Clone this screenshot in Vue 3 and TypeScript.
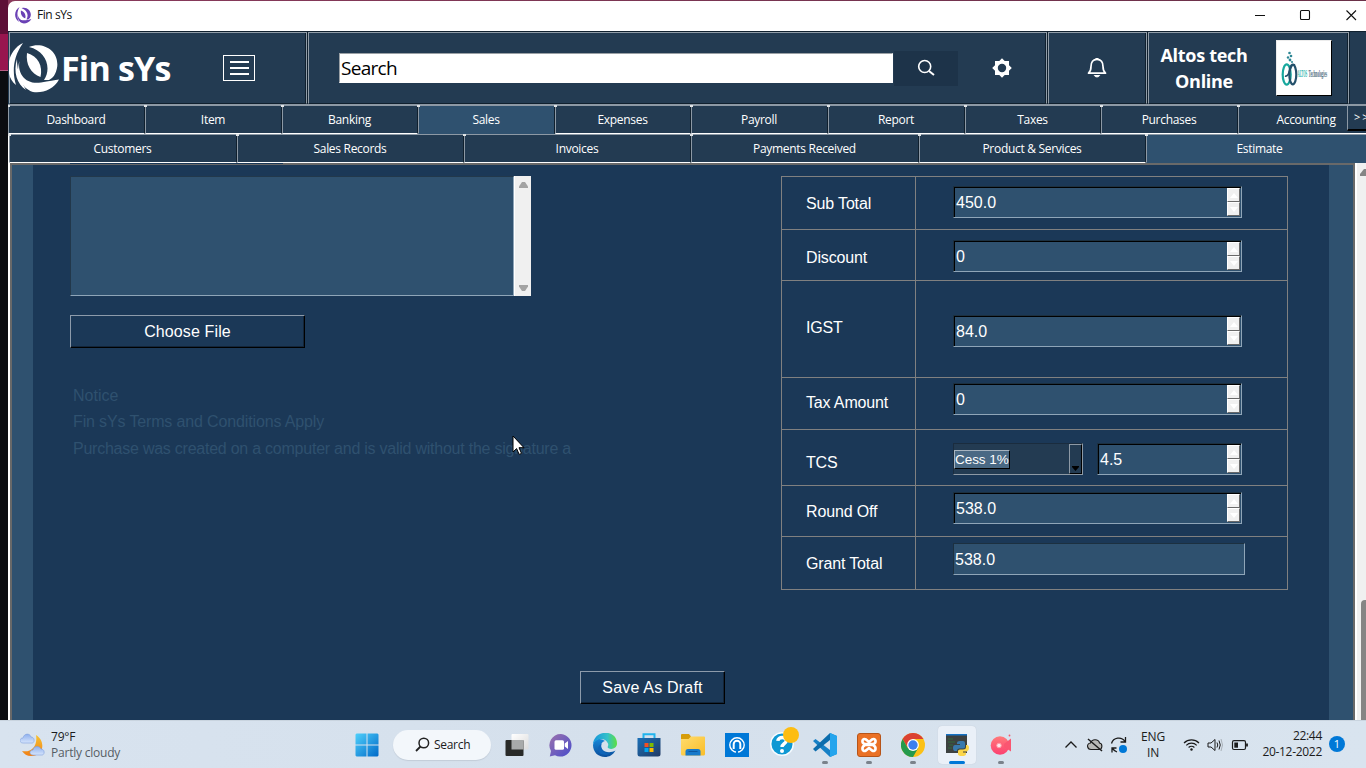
<script setup lang="ts">
interface Tab { label: string; active?: boolean }
interface Row { label: string; value: string; height: number; labelTop: number; fieldTop: number; kind: 'spin' | 'tcs' | 'plain' }

const mainTabs: Tab[] = [
  { label: 'Dashboard' }, { label: 'Item' }, { label: 'Banking' }, { label: 'Sales', active: true },
  { label: 'Expenses' }, { label: 'Payroll' }, { label: 'Report' }, { label: 'Taxes' },
  { label: 'Purchases' }, { label: 'Accounting' },
]
const subTabs: Tab[] = [
  { label: 'Customers' }, { label: 'Sales Records' }, { label: 'Invoices' },
  { label: 'Payments Received' }, { label: 'Product & Services' }, { label: 'Estimate', active: true },
]
const rows: Row[] = [
  { label: 'Sub Total', value: '450.0', height: 53, labelTop: 17, fieldTop: 10, kind: 'spin' },
  { label: 'Discount', value: '0', height: 51, labelTop: 18, fieldTop: 11, kind: 'spin' },
  { label: 'IGST', value: '84.0', height: 97, labelTop: 37, fieldTop: 35, kind: 'spin' },
  { label: 'Tax Amount', value: '0', height: 52, labelTop: 15, fieldTop: 6, kind: 'spin' },
  { label: 'TCS', value: '4.5', height: 56, labelTop: 23, fieldTop: 14, kind: 'tcs' },
  { label: 'Round Off', value: '538.0', height: 51, labelTop: 16, fieldTop: 7, kind: 'spin' },
  { label: 'Grant Total', value: '538.0', height: 54, labelTop: 17, fieldTop: 7, kind: 'plain' },
]
</script>

<template>
  <div class="desktop">
    <div class="edge"><i class="e1"></i><i class="e2"></i><i class="e3"></i></div>
    <div class="window">
      <div class="titlebar">
        <svg class="tlogo" width="17" height="17" viewBox="0 0 52 52" fill="#6a41b5">
          <path d="M14 0C-3 9-5 36 13 46C6 34 4 17 14 0Z" />
          <path d="M9 18C7 32 17 43 32 40.500C40 39 46 38 50 36.500C45 46 34 51 24 50C12 46 5 33 9 18Z" />
          <path d="M20 3.500C35-2 51 11 48 27C47 32 44.500 36 40 38L35 38C43 26 37 8 20 3.500Z" />
          <path d="M18 10.500C29 14 34 24 31.500 34.500C22 31.500 16.500 22 18 10.500Z" />
        </svg>
        <span class="ttext">Fin sYs</span>
        <svg class="wctl" width="104" height="14" viewBox="0 0 104 14" fill="none" stroke="#111" stroke-width="1.1">
          <path d="M0 7.500H10" /><rect x="45.500" y="2.500" width="9" height="9" rx="1" /><path d="M91.500 2.500L101 12M101 2.500L91.500 12" />
        </svg>
      </div>

      <header class="header">
        <div class="panel p1">
          <svg class="logo" width="52" height="52" viewBox="0 0 52 52" fill="#fff">
            <path d="M14 1C-3 9-5 34 7 43C3 30 4 15 14 1Z" />
            <path d="M8 17C4 30 8 42 17 48C12 39 8 30 8 17Z" />
            <path d="M10.500 19C8 32 17 43 32 40.500C40 39 46 38 50 37.500C45 47 34 51.500 24 50C12 46 6 33 10.500 19Z" />
            <path d="M20 5C35-1 51 10 48 26C47 31 44.500 36 40 38L35 38C43 26 37 9 20 5Z" />
            <path d="M18 11C29 14 34 24 31.500 35C22 32 16.500 22 18 11Z" />
          </svg>
          <span class="brand">Fin sYs</span>
          <span class="burger"><i></i><i></i><i></i></span>
        </div>
        <div class="panel p2">
          <div class="search">Search</div>
          <div class="sbtn">
            <svg width="20" height="20" viewBox="0 0 20 20" fill="none" stroke="#fff" stroke-width="1.6"><circle cx="8.700" cy="8.500" r="6" /><path d="M13 13L18 17" stroke-width="2" /></svg>
          </div>
          <svg class="gear" width="20" height="20" viewBox="0 0 20 20"><path fill="#fff" fill-rule="evenodd" d="M10 .2L12.700 3H17V7.300L19.800 10L17 12.700V17H12.700L10 19.800L7.300 17H3V12.700L.2 10L3 7.300V3H7.300ZM10 5.800A4.200 4.200 0 1 0 10 14.200A4.200 4.200 0 1 0 10 5.800Z" /></svg>
        </div>
        <div class="panel p3">
          <svg width="20" height="22" viewBox="0 0 20 22" fill="none" stroke="#fff" stroke-width="1.700" stroke-linejoin="round"><path d="M1.500 16.200H18.500C16.500 14.500 16 13 16 9.500C16 5 14 2.300 10 2.300C6 2.300 4 5 4 9.500C4 13 3.500 14.500 1.500 16.200Z" /><path d="M8.800 2.300V1.500H11.200V2.300M7.300 18.500C8 20.400 12 20.400 12.700 18.500Z" fill="#fff" stroke-width="1" /></svg>
        </div>
        <div class="panel p4">
          <span class="company">Altos tech<br>Online</span>
          <div class="clogo">
            <svg width="50" height="36" viewBox="0 0 50 36">
              <g fill="none" stroke-width="2.200"><ellipse cx="5.700" cy="23.500" rx="4" ry="10.200" stroke="#17a89e" /><ellipse cx="11.800" cy="23.500" rx="3.500" ry="9.800" stroke="#24516b" /><path d="M4 25C9 27 9 11 14 14" stroke="#24516b" stroke-width="1.600" /></g>
              <g fill="#2c8694"><circle cx="8.500" cy="2" r="1.300" /><circle cx="10" cy="5" r="1.300" /><circle cx="7" cy="6.500" r="1.200" /><circle cx="9" cy="9" r="1.400" /><circle cx="11" cy="11" r="1" /></g>
              <g font-family="Liberation Serif, serif" font-size="11" font-weight="bold">
                <text transform="translate(16.500 26) scale(.27 1)" fill="#24b3aa">ALTOS</text>
                <text transform="translate(27.500 26) scale(.31 1)" fill="#4b6b80">Technologies</text>
              </g>
            </svg>
          </div>
        </div>
      </header>

      <nav class="tabs main-tabs">
        <div v-for="t in mainTabs" :key="t.label" class="tab" :class="{ active: t.active }">{{ t.label }}</div>
        <span class="more">&gt;&gt;</span>
      </nav>
      <nav class="tabs sub-tabs">
        <div v-for="t in subTabs" :key="t.label" class="tab" :class="{ active: t.active }">{{ t.label }}</div>
      </nav>

      <main class="body">
        <div class="canvas">
          <div class="sheet">
            <section class="left">
              <div class="notes">
                <div class="area"></div>
                <div class="abar">
                  <svg width="9" height="6" viewBox="0 0 9 6"><path d="M3 0H6L9 4.500V6H0V4.500Z" fill="#a3a3a3" /></svg>
                  <svg width="9" height="6" viewBox="0 0 9 6"><path d="M3 6H6L9 1.500V0H0V1.500Z" fill="#a3a3a3" /></svg>
                </div>
              </div>
              <button class="btn choose">Choose File</button>
              <div class="terms">
                <p>Notice</p>
                <p class="t2">Fin sYs Terms and Conditions Apply</p>
                <p class="t3">Purchase was created on a computer and is valid without the signature a</p>
              </div>
              <button class="btn save">Save As Draft</button>
            </section>
            <section class="totals">
              <div v-for="r in rows" :key="r.label" class="row" :style="{ height: r.height + 'px' }">
                <div class="lab" :style="{ paddingTop: r.labelTop + 'px' }">{{ r.label }}</div>
                <div class="val" :style="{ paddingTop: r.fieldTop - 1 + 'px' }">
                  <div v-if="r.kind === 'tcs'" class="combo">
                    <span class="picked">Cess 1%</span>
                    <span class="drop"><svg width="7" height="5" viewBox="0 0 7 5"><path d="M0 0H7V1L3.500 5L0 1Z" /></svg></span>
                  </div>
                  <div class="field" :class="r.kind">
                    <span>{{ r.value }}</span>
                    <div v-if="r.kind !== 'plain'" class="spinner">
                      <i><svg width="8" height="5" viewBox="0 0 8 5"><path d="M4 0L8 5H0Z" fill="#fff" /></svg></i>
                      <i><svg width="8" height="5" viewBox="0 0 8 5"><path d="M0 0H8L4 5Z" fill="#fff" /></svg></i>
                    </div>
                  </div>
                </div>
              </div>
            </section>
          </div>
        </div>
        <div class="vbar"><svg width="6" height="7" viewBox="0 0 6 7"><path d="M0 7V5L4 0H6V7Z" fill="#858585" /></svg><i></i></div>
        <i class="sliver"></i>
      </main>
    </div>

    <footer class="taskbar">
      <div class="weather">
        <svg width="25" height="24" viewBox="0 0 25 24">
          <defs><linearGradient id="moon" x1="0" y1="0" x2="0" y2="1"><stop offset="0" stop-color="#f7c331" /><stop offset="1" stop-color="#f07f16" /></linearGradient>
            <linearGradient id="cl" x1="0" y1="0" x2="0" y2="1"><stop offset="0" stop-color="#8fb0ee" /><stop offset="1" stop-color="#d5e4fb" /></linearGradient></defs>
          <path d="M16 2C26 8 24 23 11 23C7 23 4 21 2 18C11 20 18 13 16 2Z" fill="url(#moon)" />
          <path d="M3 10C-1 10-1 5 3 5C4 0 10 0 11 4C15 4 15 10 12 10Z" fill="url(#cl)" stroke="#7f9fdd" stroke-width=".6" />
          <path d="M13 22C9 22 9 17 13 17C14 12 20 13 21 16C25 16 25 22 22 22Z" fill="url(#cl)" stroke="#7f9fdd" stroke-width=".6" />
        </svg>
        <p>79°F<br><span>Partly cloudy</span></p>
      </div>

      <div class="apps">
        <div class="app"><svg width="24" height="24" viewBox="0 0 24 24">
          <defs><linearGradient id="win" x1="0" y1="0" x2="1" y2="1"><stop offset="0" stop-color="#4fd0fb" /><stop offset="1" stop-color="#0069c8" /></linearGradient></defs>
          <path fill="url(#win)" d="M1.500 .5H11.500V11.500H.5V1.500ZM12.500 .5H22.500L23.500 1.500V11.500H12.500ZM.5 12.500H11.500V23.500H1.500L.5 22.500ZM12.500 12.500H23.500V22.500L22.500 23.500H12.500Z" /></svg></div>
        <div class="pill"><svg width="15" height="15" viewBox="0 0 15 15" fill="none" stroke="#222" stroke-width="1.500"><circle cx="8.800" cy="6" r="4.800" /><path d="M5.500 9.500L1 14" stroke-width="1.800" /></svg>Search</div>
        <div class="app"><svg width="24" height="24" viewBox="0 0 24 24">
          <defs><linearGradient id="tv" x1="0" y1="0" x2="1" y2="1"><stop offset="0" stop-color="#fff" /><stop offset="1" stop-color="#dcdcdc" /></linearGradient></defs>
          <rect x="6.500" y="1" width="17" height="15.500" rx="1" fill="url(#tv)" /><rect x=".5" y="7" width="18" height="16" rx="1" fill="#292a28" /><path d="M6.500 7H18.500V16.500H6.500Z" fill="#a8aaaa" /></svg></div>
        <div class="app"><svg width="24" height="24" viewBox="0 0 24 24">
          <defs><linearGradient id="chat" x1="0" y1="0" x2="1" y2="1"><stop offset="0" stop-color="#9c72ad" /><stop offset="1" stop-color="#484ccb" /></linearGradient></defs>
          <path fill="url(#chat)" d="M12 1A11.300 11.300 0 1 1 6 22.300L.8 23.500L2 18A11.300 11.300 0 0 1 12 1Z" /><rect x="5.500" y="7.300" width="9.500" height="9.500" rx="1.500" fill="#fff" /><path d="M15.700 10.500L19 8V16L15.700 13.500Z" fill="#fff" /></svg></div>
        <div class="app"><svg width="24" height="24" viewBox="0 0 24 24">
          <defs><linearGradient id="e1" x1="0" y1="0" x2="1" y2="0"><stop offset="0" stop-color="#1795dc" /><stop offset=".6" stop-color="#34c1c9" /><stop offset="1" stop-color="#5ee03e" /></linearGradient><linearGradient id="e2" x1="0" y1="0" x2="0" y2="1"><stop offset="0" stop-color="#1687d9" /><stop offset="1" stop-color="#0b4e9b" /></linearGradient></defs>
          <path fill="url(#e2)" d="M0 12C1 6 7 4 12 8C8 9 7 13 9 16C12 20 18 20 22.500 17.500C20 22 16 24 12 24C5 24 0 19 0 12Z" />
          <path fill="url(#e1)" d="M0 11.500C1-4 24-4 24 10.500C24 15 19 17 15.500 15.300C13.500 14 16 13 15 10.500C12 4 3 5 0 11.500Z" /><path d="M8.500 11C7 16 11 21 17 20.500C13 23 7 22 5.500 18C4.500 15 6 12 8.500 11Z" fill="#0e64b8" /></svg></div>
        <div class="app"><svg width="24" height="24" viewBox="0 0 24 24">
          <defs><linearGradient id="st" x1="0" y1="0" x2="1" y2="1"><stop offset="0" stop-color="#1a70b8" /><stop offset="1" stop-color="#223a63" /></linearGradient></defs>
          <path d="M6.500 6V1.300H17.500V6" fill="none" stroke="#21b4ed" stroke-width="2" /><path d="M.5 5H23.500V21Q23.500 23.500 21 23.500H3Q.5 23.500 .5 21Z" fill="url(#st)" />
          <path fill="#f25022" d="M7.500 10h4v4h-4z" /><path fill="#7fba00" d="M12.500 10h4v4h-4z" /><path fill="#00a4ef" d="M7.500 15h4v4h-4z" /><path fill="#ffb900" d="M12.500 15h4v4h-4z" /></svg></div>
        <div class="app"><svg width="24" height="24" viewBox="0 0 24 24">
          <defs><linearGradient id="fo" x1="0" y1="0" x2="1" y2="1"><stop offset="0" stop-color="#ffdc6e" /><stop offset="1" stop-color="#f9bd28" /></linearGradient></defs>
          <path d="M0 2Q0 1 1 1H8L10 3.500V8H0Z" fill="#d69c0a" /><path d="M0 6H7.500L10 3.500H23Q24 3.500 24 4.500V21Q24 22.500 22.500 22.500H1.500Q0 22.500 0 21Z" fill="url(#fo)" /><path d="M4.500 22.500V18.500Q4.500 16 7 16H17Q19.500 16 19.500 18.500V22.500Z" fill="#1679ca" /><path d="M7.500 18.500H16.500" stroke="#0b57a0" /></svg></div>
        <div class="app"><svg width="24" height="24" viewBox="0 0 24 24"><path fill="#0078d7" d="M0 0H24V24H0Z" /><circle cx="12" cy="12" r="7.200" fill="none" stroke="#fff" stroke-width="1.400" /><path d="M8.700 16V11A3.300 3.300 0 0 1 15.300 11V16" fill="none" stroke="#fff" stroke-width="2" /><path d="M11 20V12A1 1 0 0 1 13 12V20Z" fill="#0078d7" /></svg></div>
        <div class="app"><svg width="30" height="30" viewBox="0 0 30 30" class="help"><circle cx="13" cy="17" r="11.300" fill="#0e98d3" stroke="#f6fbff" stroke-width="1.500" /><path d="M8.800 13.800C9 9.500 17.500 9.300 17.200 13.800C17 16.500 13 16.800 13 20" fill="none" stroke="#fff" stroke-width="3.400" /><circle cx="13" cy="24" r="2" fill="#fff" /><circle cx="22" cy="8" r="8" fill="#fdbd12" /></svg></div>
        <div class="app run"><svg width="24" height="24" viewBox="0 0 24 24"><path d="M17 0L24 3V21L17 24L0 8L2.500 6L17 17Z" fill="#1680c6" /><path d="M17 0L0 16L2.500 18.500L17 7Z" fill="#0c6dad" /><path d="M17 0L24 3V21L17 24Z" fill="#25a5ed" /></svg></div>
        <div class="app run"><svg width="24" height="24" viewBox="0 0 24 24"><rect x=".5" y=".5" width="23" height="23" rx="2.500" fill="#ea7125" stroke="#b65419" /><path d="M9 6.500C5 4.500 4 10 8 11H16C20 10 19 4.500 15 6.500L12 9L9 6.500ZM9 17.500C5 19.500 4 14 8 12H16C20 14 19 19.500 15 17.500L12 15Z" fill="none" stroke="#fff" stroke-width="2.600" stroke-linejoin="round" /></svg></div>
        <div class="app run"><svg width="24" height="24" viewBox="0 0 24 24"><circle cx="12" cy="12" r="12" fill="#fbc116" /><path d="M1.600 6A12 12 0 0 1 22.400 6H12L7 15Z" fill="#db4132" /><path d="M1.600 6A12 12 0 0 0 12 24L17.200 15L12 12L6.800 15Z" fill="#249a4c" /><circle cx="12" cy="12" r="5.900" fill="#fff" /><circle cx="12" cy="12" r="4.700" fill="#3c7ff0" /></svg></div>
        <div class="app current"><svg width="24" height="24" viewBox="0 0 24 24"><path fill="#3d4140" d="M1 1H22V20H1Z" /><path fill="#1673c5" d="M1 1H22V2.500H1Z" /><path d="M3 6H8M3 9H10M4 12H8M3 15H7" stroke="#326b3c" stroke-width="1.200" />
          <path fill="#3979ad" d="M15 8H18Q20 8 20 10V14Q20 15.500 18 15.500H14Q12 15.500 12 18H10Q8 18 8 15Q8 12 10 12H15V11H12V10Q12 8 15 8Z" /><path fill="#fbd64a" d="M21 12H22Q24 12 24 15Q24 18 22 18.500H18V19.500H21V21Q21 23 17 23Q13 23 13 21V18Q13 16.500 15 16.500H18Q21 16.500 21 14Z" /></svg></div>
        <div class="app run"><svg width="24" height="24" viewBox="0 0 24 24"><defs><linearGradient id="cam" x1="0" y1="0" x2="0" y2="1"><stop offset="0" stop-color="#ff7b7c" /><stop offset="1" stop-color="#fc4070" /></linearGradient></defs><circle cx="11" cy="12.500" r="9.300" fill="url(#cam)" /><path d="M15 11L22 5.500V18.500L15 14Z" fill="#fa5671" /><circle cx="10" cy="12.500" r="2.300" fill="#ffe7ec" stroke="#ff9aa6" /><circle cx="20.500" cy="2.500" r=".9" fill="#f6586e" /></svg></div>
      </div>

      <div class="tray">
        <svg width="75" height="24" viewBox="0 0 75 24" fill="none" stroke="#1b1b1b" stroke-width="1.300">
          <path d="M2.500 14.500L8 9L13.500 14.500" />
          <path d="M28 16.500C24 16.500 23 10.500 27.500 10C29 5.500 35.500 6 36.500 10C40 10.500 39.500 16.500 36 16.500Z" fill="#b9b9b6" stroke-width="1.100" /><path d="M25 6L39 18" stroke-width="1.500" />
          <path d="M48.500 10.500A7.500 7.500 0 0 1 62 8.500M62.500 4V9H57.500M49 19.500V15H53.500M49.500 15.500C51 17.500 52.500 18.500 54 19" /><circle cx="60" cy="16" r="4" fill="#0078d7" stroke="none" />
        </svg>
        <div class="lang">ENG<br>IN</div>
        <svg class="status" width="68" height="20" viewBox="0 0 68 20" fill="none" stroke="#1b1b1b" stroke-width="1.200">
          <path d="M1 8A10.500 10.500 0 0 1 16 8M3.300 10.300A7.200 7.200 0 0 1 13.700 10.300M5.600 12.500A4.200 4.200 0 0 1 11.400 12.500" /><circle cx="8.500" cy="14.500" r="1.200" fill="#1b1b1b" stroke="none" />
          <path d="M25 8H28L32 4.500V15.500L28 12H25ZM34 7.500Q35.500 10 34 12.500M36 5.500Q38.500 10 36 14.500" stroke-width="1" /><path d="M38 4Q41 10 38 16" stroke="#a8b0b8" stroke-width="1" />
          <rect x="49.500" y="5.700" width="13" height="8.800" rx="1.500" /><path d="M51.300 7.500H55V12.700H51.300Z" fill="#1b1b1b" stroke="none" /><path d="M64 8.500V11.500" stroke-width="1.800" />
        </svg>
        <div class="clock">22:44<br>20-12-2022</div>
        <div class="badge">1</div>
      </div>
    </footer>

    <svg class="cursor" width="14" height="22" viewBox="0 0 14 22"><path d="M1 1V17L4.600 13.600L7.200 19.400L9.500 18.400L7 12.700H12Z" fill="#fff" stroke="#000" stroke-width="1" /></svg>
  </div>
</template>

<style>
html, body { margin: 0; overflow: hidden; }
</style>

<style scoped>
* { box-sizing: border-box; }
.desktop { position: relative; width: 1366px; height: 768px; overflow: hidden; background: linear-gradient(90deg, #8a3a5c, #6a3048); font-family: "Open Sans", "Noto Sans", sans-serif; display: grid; grid-template: 720px 48px / 8px 1358px; }
i { display: block; font-style: normal; }
p { margin: 0; }
.edge { background: #0b0c10; }
.e1 { height: 34px; background: #5d0f37; }
.e2 { height: 36px; background: #98164f; }
.e3 { height: 1px; background: #b65b82; }
.window { margin-top: 1px; height: 719px; background: #fff; border-top-left-radius: 7px; overflow: hidden; }
.titlebar { height: 30px; display: flex; align-items: center; padding-left: 7px; color: #111; }
.tlogo { margin-bottom: 2px; }
.ttext { font-size: 12px; letter-spacing: -0.45px; margin-left: 5px; flex: 1; line-height: 28px; padding-bottom: 2px; }
.wctl { margin: 0 7px 2px 0; flex: none; }
.header { height: 75px; background: #233b52; display: flex; gap: 1px; border-top: 1px solid #10202e; border-bottom: 2px solid #8d99a5; padding-left: 1px; }
.panel { flex: none; height: 72px; border: 1px solid #919da8; border-bottom-color: #10202e; box-shadow: inset -1px 0 #10202e, 1px 0 #10202e; display: flex; align-items: center; }
.p1 { width: 298px; }
.p2 { width: 739px; padding-left: 30px; }
.p3 { width: 99px; justify-content: center; padding-right: 2px; }
.p4 { width: 201px; padding-left: 11px; }
.logo { flex: none; margin-left: -1px; }
.brand { width: 161px; color: #fff; font-weight: 700; font-size: 34px; line-height: 40px; letter-spacing: -0.8px; white-space: nowrap; }
.burger { width: 32px; height: 26px; border: 1px solid #fff; display: flex; flex-direction: column; justify-content: center; align-items: center; gap: 3.5px; margin-left: 1px; }
.burger i { width: 19px; height: 2.5px; background: #fff; }
.search { width: 554px; height: 30px; background: #fff; border: 1px solid #9aa0a5; border-right-color: #fff; border-bottom-color: #fff; color: #000; font-size: 19px; line-height: 28px; letter-spacing: -0.7px; padding-left: 1px; }
.sbtn { width: 64px; height: 35px; margin-left: 1px; background: #1d3349; display: flex; align-items: center; justify-content: center; }
.gear { margin-left: 34px; }
.company { width: 88px; text-align: center; font-weight: 700; font-size: 18px; line-height: 26px; color: #fff; white-space: nowrap; letter-spacing: -0.3px; }
.clogo { width: 56px; height: 56px; margin-left: 28px; background: #fff; border: 1px solid #ececec; border-right-color: #000; border-bottom-color: #000; display: flex; padding: 10px 0 0 4px; }
.clogo svg { overflow: visible; }
.tabs { display: grid; background: #233b52; color: #fff; font-size: 12px; position: relative; letter-spacing: -0.3px; }
.main-tabs { height: 29px; grid-template-columns: 137px 137px 136px 137px 136px 137px 137px 136px 137px 137px; border-bottom: 1px solid #8d99a5; }
.sub-tabs { height: 28px; margin-left: 1px; grid-template-columns: 228px 227px 227px 228px 227px 228px; }
.tab { position: relative; text-align: center; line-height: 27px; border-left: 1px solid #8d99a5; border-right: 1px solid #10202e; border-bottom: 1px solid #fff; padding-right: 1px; }
.tab::before { content: ""; position: absolute; left: -2px; top: -1px; width: 3px; height: 2px; background: #dfe3e6; }
.tab.active { background: #2f516f; border-bottom-color: #2f516f; }
.more { position: absolute; left: 1339px; top: 0; width: 30px; height: 25px; background: #233b52; border-left: 1px solid #8d99a5; border-bottom: 2px solid #000; line-height: 22px; padding-left: 6px; letter-spacing: 2px; font-size: 11px; }
.body { position: relative; height: 557px; display: flex; }
.canvas { width: 1345px; margin-left: 2px; border: 2px solid #696969; border-bottom: 0; background: #2f516f; padding-left: 21px; flex: none; }
.sheet { width: 1296px; height: 555px; background: #1b3857; display: flex; }
.vbar { width: 12px; margin-left: 2px; background: #f0f0f0; }
.vbar svg { display: block; margin: 6px 0 0 3px; }
.vbar i { margin: 424px 0 0 4px; height: 120px; background: #858585; border-top-left-radius: 4px; }
.sliver { position: absolute; left: 62px; top: 0; width: 213px; height: 1px; background: #1b3857; }
.left { width: 748px; padding: 11px 0 0 37px; flex: none; }
.notes { display: flex; height: 120px; }
.area { width: 444px; background: #2f516f; border: 1px solid #22384b; border-right-color: #8fa5b8; border-bottom-color: #8fa5b8; }
.abar { width: 17px; background: #f0f0f0; border-left: 1px solid #fff; display: flex; flex-direction: column; justify-content: space-between; padding: 6px 0 5px 4px; }
.btn { display: block; height: 33px; padding: 0; color: #fff; background: #1b3857; border: 1px solid #8d9bab; border-right-color: #000; border-bottom-color: #000; box-shadow: inset -1px -1px #12253a; font: 16px/30px "Liberation Sans", sans-serif; letter-spacing: 0.12px; }
.choose { width: 235px; margin-top: 19px; }
.save { width: 145px; margin: 208px 0 0 510px; padding-top: 1px; letter-spacing: 0.2px; }
.terms { height: 79.5px; font: 16px/26px "Liberation Sans", sans-serif; color: #2f516f; margin: 35px 0 0 3px; white-space: nowrap; }
.t2 { letter-spacing: -0.14px; }
.t3 { line-height: 27.5px; letter-spacing: -0.24px; }
.totals { width: 507px; height: 414px; margin-top: 11px; flex: none; border: 1px solid #808080; border-top: 0; font: 16px/20px "Liberation Sans", sans-serif; color: #fff; }
.row { display: flex; border-top: 1px solid #808080; }
.totals .row:last-child { height: 53px; }
.lab { width: 134px; padding-left: 24px; border-right: 1px solid #808080; letter-spacing: -0.15px; }
.val { padding-left: 37px; display: flex; }
.field { width: 289px; height: 32px; background: #2f516f; border: 1px solid #1c3040; border-right-color: #8fa5b8; border-bottom-color: #8fa5b8; display: flex; justify-content: space-between; line-height: 31px; padding-left: 2px; }
.field.spin, .field.tcs { box-shadow: inset 1px 1px #000; }
.field.tcs { width: 145px; }
.field.plain { width: 292px; padding-left: 1px; }
.spinner { width: 13px; margin: 1px 1px 0 0; }
.spinner i { width: 13px; height: 14px; background: #f0f0f0; border: 1px solid #fff; border-right-color: #696969; border-bottom-color: #696969; display: flex; align-items: center; justify-content: center; }
.combo { width: 130px; height: 32px; margin-right: 14px; background: #233b52; border: 1px solid #1a2c3e; border-right-color: #8d99a5; border-bottom-color: #8d99a5; display: flex; justify-content: space-between; }
.picked { width: 56px; height: 19px; margin-top: 6px; background: #4a6984; border: 1px solid #a6b3bf; border-right-color: #000; border-bottom-color: #000; font-size: 13.5px; line-height: 17px; white-space: nowrap; letter-spacing: -0.05px; }
.drop { width: 13px; height: 30px; border: 1px solid #8d99a5; border-right-color: #000; border-bottom-color: #000; display: flex; align-items: flex-end; justify-content: center; padding-bottom: 2px; }
.taskbar { grid-column: 1 / 3; background: linear-gradient(90deg, #d8e3ef, #d5e0ec 45%, #d9e4ef); border-top: 1px solid #c9d4df; display: flex; align-items: center; font-size: 12px; color: #1b1b1b; }
.weather { width: 343px; padding-left: 20px; display: flex; align-items: center; line-height: 16px; flex: none; }
.weather p { margin-left: 6px; padding-top: 1px; letter-spacing: -0.2px; }
.weather span { color: #565d64; letter-spacing: -0.22px; }
.apps { display: flex; width: 678px; height: 47px; align-items: center; flex: none; }
.app { position: relative; width: 44px; height: 40px; display: flex; align-items: center; justify-content: center; flex: none; }
.app:first-child { width: 47px; margin-right: 3px; }
.app svg { flex: none; }
.help { margin: -6px 0 0 6px; }
.run::after { content: ""; position: absolute; bottom: 1px; width: 6px; height: 3px; border-radius: 2px; background: #7a828b; }
.current::before { content: ""; position: absolute; z-index: 0; inset: 1px 3px; background: #eaf0f8; border-radius: 4px; box-shadow: 0 0 1px #b8c2cd; }
.current svg { position: relative; }
.current::after { content: ""; position: absolute; bottom: 1px; width: 16px; height: 3px; border-radius: 2px; background: #0078d7; }
.pill { width: 98px; height: 30px; margin-right: 4px; border-radius: 15px; background: #f3f7fb; display: flex; align-items: center; gap: 4px; padding-left: 22px; box-shadow: 0 1px 1px #c2ccd8; flex: none; letter-spacing: -0.3px; }
.tray { flex: 1; display: flex; align-items: center; line-height: 16px; padding-left: 42px; }
.lang { width: 26px; text-align: center; letter-spacing: -0.2px; margin-left: 2px; margin-right: 17px; }
.clock { width: 74px; text-align: right; white-space: nowrap; letter-spacing: -0.3px; margin-left: -3px; margin-top: -2px; }
.badge { width: 16px; height: 16px; border-radius: 8px; background: #0078d7; color: #fff; text-align: center; font-size: 11px; margin-left: 7px; margin-top: -2px; flex: none; }
.tray svg { flex: none; }
.cursor { position: absolute; left: 512px; top: 435px; }
</style>
